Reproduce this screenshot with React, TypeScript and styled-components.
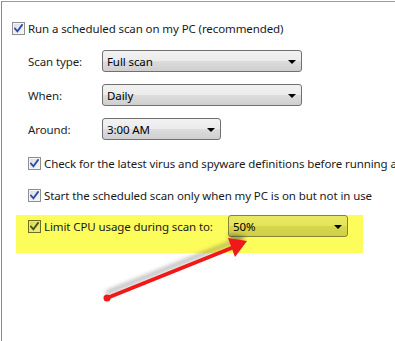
import React from "react";
import styled, { createGlobalStyle } from "styled-components";

const GlobalStyle = createGlobalStyle`
    html, body {
        margin: 0;
        padding: 0;
        background: #fff;
        overflow: hidden;
    }
    body {
        font-family: "Noto Sans", "Open Sans", sans-serif;
        font-size: 11.5px;
        letter-spacing: -0.1px;
        color: #1a1a1a;
    }
`;

const Frame = styled.div`
    position: relative;
    margin: 1px 0 0 1px;
    width: 394px;
    height: 336px;
    border-top: 1px solid #9a9a9a;
    border-left: 1px solid #8a8a8a;
    border-bottom: 1px solid #dcdcdc;
    padding: 16px 0 0 10px;
    box-sizing: content-box;
    overflow: hidden;
`;

const Content = styled.div`
    display: flex;
    flex-direction: column;
`;

const CheckRow = styled.label`
    display: flex;
    align-items: center;
    gap: 3px;
    height: 20px;
    white-space: nowrap;
`;

const Box = styled.span<{ $tint?: boolean }>`
    display: inline-flex;
    align-items: center;
    justify-content: center;
    flex: none;
    width: 11px;
    height: 11px;
    border: 1px solid ${(p) => (p.$tint ? "#6e6e22" : "#8e8f8f")};
    background: ${(p) =>
        p.$tint
            ? "linear-gradient(135deg, #d6d64a, #f2f28a)"
            : "linear-gradient(135deg, #dcdde4, #f8f8fa)"};
    box-shadow: inset 0 0 0 1px ${(p) => (p.$tint ? "#e8e86a" : "#f4f4f4")};
`;

const Form = styled.div`
    display: grid;
    grid-template-columns: 74px auto;
    row-gap: 12px;
    align-items: center;
    margin: 12px 0 13px 16px;
`;

const FieldLabel = styled.span`
    color: #1e1e1e;
`;

const Select = styled.div<{ $width: number; $tint?: boolean }>`
    display: flex;
    align-items: center;
    justify-content: space-between;
    box-sizing: border-box;
    width: ${(p) => p.$width}px;
    height: 22px;
    padding: 0 5px 0 4px;
    border: 1px solid ${(p) => (p.$tint ? "#84843a" : "#707070")};
    border-radius: 3px;
    background: ${(p) =>
        p.$tint
            ? "linear-gradient(#eaea62 0%, #e4e45c 50%, #d8d84e 50%, #cfcf46 100%)"
            : "linear-gradient(#f2f2f2 0%, #ebebeb 50%, #dddddd 50%, #cfcfcf 100%)"};
    color: #000;
    white-space: nowrap;
`;

const Caret = styled.span`
    width: 0;
    height: 0;
    border-left: 4px solid transparent;
    border-right: 4px solid transparent;
    border-top: 4px solid #000;
    margin-top: 1px;
`;

const Checks = styled.div`
    display: flex;
    flex-direction: column;
    gap: 12px;
    margin-left: 16px;
`;

const Highlight = styled.div`
    display: flex;
    align-items: center;
    margin: 10px 0 0 4px;
    width: 347px;
    height: 38px;
    box-sizing: border-box;
    padding: 0 0 16px 12px;
    background: #fcfc5a;
`;

const HighlightLabel = styled.span`
    display: flex;
    align-items: center;
    gap: 3px;
    width: 200px;
    white-space: nowrap;
`;

const ArrowLayer = styled.svg`
    position: absolute;
    left: -2px;
    top: -2px;
    pointer-events: none;
`;

const Tick = ({ tint }: { tint?: boolean }) => (
    <svg width="9" height="9" viewBox="0 0 9 9">
        <path
            d="M1 4.6 L3.4 7.4 L8 1"
            fill="none"
            stroke={tint ? "#44501a" : "#2a4aa8"}
            strokeWidth="1.8"
            strokeLinecap="square"
        />
    </svg>
);

const Check = ({ tint }: { tint?: boolean }) => (
    <Box $tint={tint}>
        <Tick tint={tint} />
    </Box>
);

const Dropdown = ({ value, width, tint }: { value: string; width: number; tint?: boolean }) => (
    <Select $width={width} $tint={tint}>
        <span>{value}</span>
        <Caret />
    </Select>
);

const App: React.FC = () => {
    return (
        <>
            <GlobalStyle />
            <Frame>
                <Content>
                    <CheckRow>
                        <Check />
                        Run a scheduled scan on my PC (recommended)
                    </CheckRow>
                    <Form>
                        <FieldLabel>Scan type:</FieldLabel>
                        <Dropdown value="Full scan" width={200} />
                        <FieldLabel>When:</FieldLabel>
                        <Dropdown value="Daily" width={200} />
                        <FieldLabel>Around:</FieldLabel>
                        <Dropdown value="3:00 AM" width={119} />
                    </Form>
                    <Checks>
                        <CheckRow>
                            <Check />
                            Check for the latest virus and spyware definitions before running a
                        </CheckRow>
                        <CheckRow>
                            <Check />
                            Start the scheduled scan only when my PC is on but not in use
                        </CheckRow>
                    </Checks>
                    <Highlight>
                        <HighlightLabel>
                            <Check tint />
                            Limit CPU usage during scan to:
                        </HighlightLabel>
                        <Dropdown value="50%" width={120} tint />
                    </Highlight>
                </Content>
                <ArrowLayer width="395" height="341" viewBox="0 0 395 341">
                    <defs>
                        <filter id="blur" x="-20%" y="-50%" width="140%" height="200%">
                            <feGaussianBlur stdDeviation="2" />
                        </filter>
                    </defs>
                    <g filter="url(#blur)" opacity="0.45" transform="translate(-1 -5)">
                        <line x1="107" y1="298" x2="234" y2="247" stroke="#555" strokeWidth="4" />
                        <polygon points="247,241 229,239 235,255" fill="#333" />
                    </g>
                    <line x1="107" y1="298" x2="234" y2="247" stroke="#f01818" strokeWidth="4" />
                    <circle cx="107" cy="298" r="3.5" fill="#f01818" />
                    <polygon points="247,241 228,238 235,257" fill="#f01818" />
                </ArrowLayer>
            </Frame>
        </>
    );
};

export default App;
